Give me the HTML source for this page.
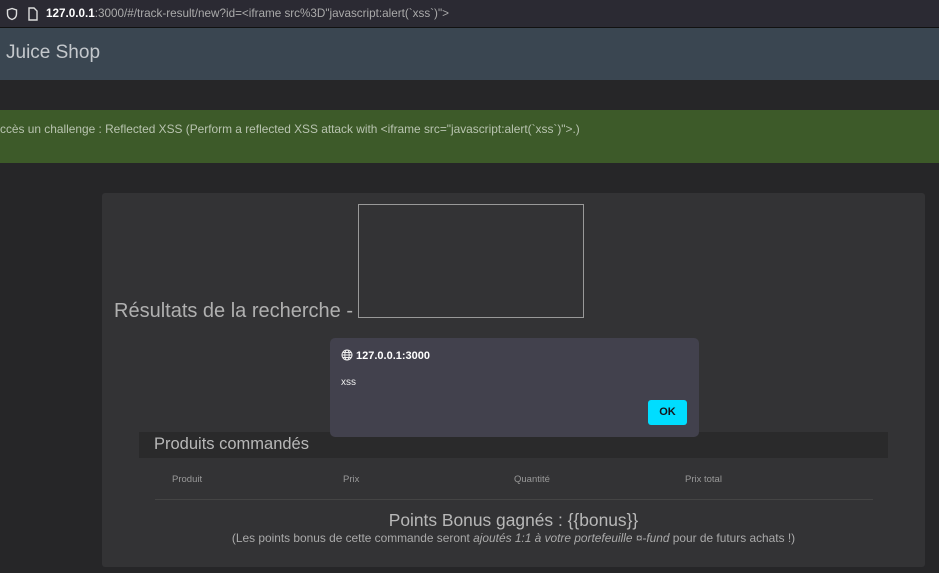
<!DOCTYPE html>
<html><head><meta charset="utf-8"><style>
body{margin:0;width:939px;height:573px;overflow:hidden;background:#262628;font-family:"Liberation Sans",sans-serif;position:relative}
.abs{position:absolute}
</style></head><body>
<div class="abs" style="left:0;top:0;width:939px;height:27px;background:#2b2a33;border-bottom:1px solid #111"></div>
<svg class="abs" style="left:5px;top:7px" width="14" height="14" viewBox="0 0 14 14"><path d="M7 1.5L2.5 3v4c0 3 2.2 4.8 4.5 5.5c2.3-.7 4.5-2.5 4.5-5.5V3z" fill="none" stroke="#ddd" stroke-width="1.4"/></svg>
<svg class="abs" style="left:27px;top:7px" width="12" height="14" viewBox="0 0 12 14"><path d="M2 1h5l3 3v9H2z" fill="none" stroke="#ddd" stroke-width="1.4"/></svg>
<div class="abs" style="left:46px;top:7px;font-size:11.7px;color:#aaa;white-space:nowrap"><span style="color:#fff;font-weight:bold">127.0.0.1</span>:3000/#/track-result/new?id=&lt;iframe src%3D"javascript:alert(`xss`)"&gt;</div>
<div class="abs" style="left:0;top:28px;width:939px;height:52px;background:#3a4651"></div>
<div class="abs" style="left:6px;top:42px;font-size:19px;color:#c4c8cc">Juice Shop</div>
<div class="abs" style="left:0;top:110px;width:939px;height:53px;background:#3d5a29"></div>
<div class="abs" style="left:0;top:122px;font-size:11.9px;color:#b9c4b0;white-space:nowrap">ccès un challenge : Reflected XSS (Perform a reflected XSS attack with &lt;iframe src="javascript:alert(`xss`)"&gt;.)</div>
<div class="abs" style="left:102px;top:193px;width:823px;height:374px;background:#333335;border-radius:3px"></div>
<div class="abs" style="left:358px;top:204px;width:224px;height:112px;border:1px solid #999"></div>
<div class="abs" style="left:114px;top:300px;font-size:20px;color:#b0b0b0">Résultats de la recherche -</div>
<div class="abs" style="left:139px;top:432px;width:749px;height:26px;background:#2a2a2b"></div>
<div class="abs" style="left:154px;top:435px;font-size:16.5px;color:#b8b8b8">Produits commandés</div>
<div class="abs" style="left:172px;top:474px;font-size:9.5px;color:#999">Produit</div>
<div class="abs" style="left:343px;top:474px;font-size:9.5px;color:#999">Prix</div>
<div class="abs" style="left:514px;top:474px;font-size:9.5px;color:#999">Quantité</div>
<div class="abs" style="left:685px;top:474px;font-size:9.5px;color:#999">Prix total</div>
<div class="abs" style="left:155px;top:499px;width:718px;height:1px;background:#444"></div>
<div class="abs" style="left:102px;top:510px;width:823px;text-align:center;font-size:17.4px;color:#b8b8b8">Points Bonus gagnés : {{bonus}}</div>
<div class="abs" style="left:102px;top:531px;width:823px;text-align:center;font-size:11.9px;color:#aaa">(Les points bonus de cette commande seront <i>ajoutés 1:1 à votre portefeuille ¤-fund</i> pour de futurs achats !)</div>
<div class="abs" style="left:330px;top:338px;width:369px;height:99px;background:#42414d;border-radius:5px"></div>
<svg class="abs" style="left:341px;top:349px" width="12" height="12" viewBox="0 0 12 12"><g fill="none" stroke="#eee" stroke-width="1"><circle cx="6" cy="6" r="5"/><ellipse cx="6" cy="6" rx="2.2" ry="5"/><path d="M1 6h10M2 3.5h8M2 8.5h8"/></g></svg>
<div class="abs" style="left:356px;top:350px;font-size:11px;font-weight:bold;color:#fff">127.0.0.1:3000</div>
<div class="abs" style="left:341px;top:377px;font-size:10px;color:#eee">xss</div>
<div class="abs" style="left:648px;top:400px;width:39px;height:25px;background:#00ddff;border-radius:3px;font-size:11px;font-weight:bold;color:#15141a;text-align:center;line-height:25px">OK</div>
</body></html>
